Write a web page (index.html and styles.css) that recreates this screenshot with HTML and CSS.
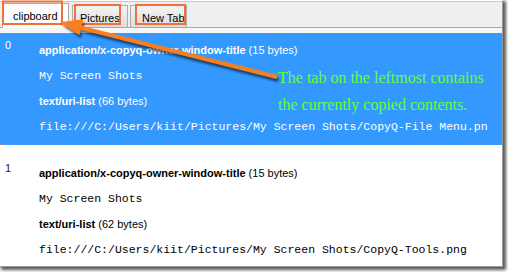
FILE: index.html
```html
<!DOCTYPE html>
<html lang="en">
<head>
    <meta charset="UTF-8">
    <title>CopyQ</title>
    <link rel="stylesheet" href="styles.css">
</head>
<body>
    <div class="shot">
        <div class="window">
            <!-- Tabs -->
            <div class="tabbar">
                <div class="tab active">clipboard</div>
                <div class="tab tab-pictures">Pictures</div>
                <div class="tab tab-new">New Tab</div>
            </div>

            <!-- Clipboard items -->
            <div class="pane">
                <div class="item selected">
                    <div class="num">0</div>
                    <div class="formats">
                        <div class="mime"><b>application/x-copyq-owner-window-title</b> (15 bytes)</div>
                        <div class="data">My Screen Shots</div>
                        <div class="mime"><b>text/uri-list</b> (66 bytes)</div>
                        <div class="data">file:///C:/Users/kiit/Pictures/My Screen Shots/CopyQ-File Menu.pn</div>
                    </div>
                </div>
                <div class="item second">
                    <div class="num">1</div>
                    <div class="formats">
                        <div class="mime"><b>application/x-copyq-owner-window-title</b> (15 bytes)</div>
                        <div class="data">My Screen Shots</div>
                        <div class="mime"><b>text/uri-list</b> (62 bytes)</div>
                        <div class="data">file:///C:/Users/kiit/Pictures/My Screen Shots/CopyQ-Tools.png</div>
                    </div>
                </div>
            </div>
        </div>

        <!-- Annotation overlay -->
        <svg class="overlay" width="508" height="272" viewBox="0 0 508 272">
            <defs>
                <filter id="blur" x="-10%" y="-10%" width="120%" height="140%">
                    <feGaussianBlur stdDeviation="1.2"/>
                </filter>
            </defs>
            <rect x="3" y="1.5" width="59" height="22.5" fill="none" stroke="#f0703a" stroke-width="2"/>
            <rect x="75" y="5" width="45" height="19" fill="none" stroke="#f0703a" stroke-width="2"/>
            <rect x="136" y="5" width="49" height="19" fill="none" stroke="#f0703a" stroke-width="2"/>
            <g filter="url(#blur)" opacity="0.55" transform="translate(1.5 3)">
                <line x1="277" y1="77" x2="78" y2="27" stroke="#000" stroke-width="4"/>
                <polygon points="60,22 83.3,19.6 79.3,35.2" fill="#000"/>
            </g>
            <line x1="277" y1="77" x2="78" y2="27" stroke="#fb7d1c" stroke-width="4"/>
            <polygon points="60,22 83.3,19.6 79.3,35.2" fill="#fb7d1c"/>
        </svg>
        <div class="note">The tab on the leftmost contains<br>the currently copied contents.</div>
    </div>
</body>
</html>
```

FILE: styles.css
```css
body {
    margin: 0;
    background: #fff;
    font-family: "Liberation Sans", Arial, sans-serif;
}

.shot {
    position: relative;
    width: 508px;
    height: 272px;
    overflow: hidden;
}

.window {
    width: 502px;
    height: 265px;
    background: #fff;
    border-top: 1px solid #fff;
    border-right: 1px solid #9a9a9a;
    border-bottom: 1px solid #9a9a9a;
    box-shadow: 2px 2px 3px 1px rgba(0, 0, 0, 0.65);
    overflow: hidden;
}

/* Tab bar */
.tabbar {
    height: 25px;
    background: #efefef;
    border-top: 1px solid #c6c6d8;
    border-bottom: 1px solid #a8a8a8;
    padding-left: 2px;
    display: flex;
    align-items: flex-end;
    gap: 2px;
}

.tab {
    box-sizing: border-box;
    height: 22px;
    padding: 6px 0 0 7px;
    font-size: 11px;
    line-height: 13px;
    color: #000;
    background: linear-gradient(#f4f4f4, #dcdcdc);
    border: 1px solid #acacac;
    border-bottom: none;
}

.tab.active {
    width: 67px;
    height: 25px;
    margin-bottom: -1px;
    padding-left: 10px;
    background: #fff;
    margin-right: 1px;
}

.tab-pictures {
    width: 56px;
}

.tab-new {
    width: 57px;
    padding-left: 11px;
}

/* List */
.pane {
    padding-top: 5px;
    background: #f6f6f6;
}

.item {
    display: flex;
    background: #fff;
    color: #000;
}

.item.selected {
    background: #3399ff;
    color: #fff;
    padding: 3px 0 5px;
    border-top: 1px dotted #e8742a;
    border-bottom: 1px dotted #e8742a;
}

.item.second {
    padding-top: 15px;
    height: 120px;
}

.num {
    width: 34px;
    padding: 2px 0 0 5px;
    font-family: "Liberation Sans", Arial, sans-serif;
    font-size: 11px;
    line-height: 13px;
    color: #3a1048;
}

.selected .num {
    color: #fff;
}

.formats {
    flex: 1;
    min-width: 0;
}

.mime,
.data {
    height: 25.5px;
    line-height: 26px;
    white-space: nowrap;
    overflow: hidden;
}

.mime {
    font-size: 11px;
}

.data {
    font-family: "Liberation Mono", "Courier New", monospace;
    font-size: 11.5px;
}

/* Annotation */
.overlay {
    position: absolute;
    top: 0;
    left: 0;
}

.note {
    position: absolute;
    left: 278px;
    top: 64px;
    font-family: "Liberation Serif", "Times New Roman", serif;
    font-size: 16px;
    line-height: 27px;
    color: #66ff33;
}
```
